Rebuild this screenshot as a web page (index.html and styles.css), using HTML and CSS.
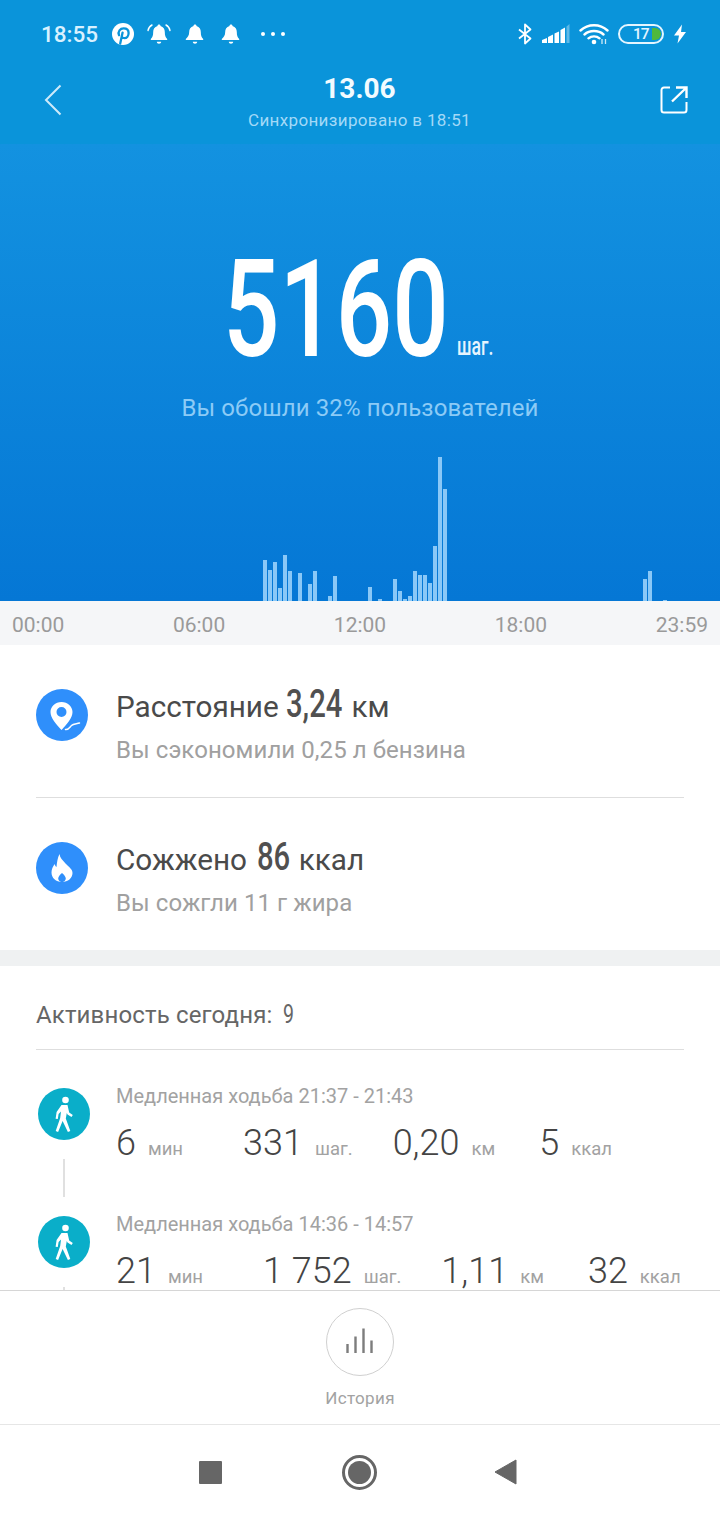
FILE: index.html
```html
<!DOCTYPE html>
<html lang="ru">
<head>
<meta charset="UTF-8">
<meta name="viewport" content="width=device-width, initial-scale=1.0">
<title>Шаги</title>
<link rel="stylesheet" href="styles.css">
</head>
<body>
<div class="app">
  <header class="topbar">
    <div class="status">
      <span class="clock">18:55</span>
      <svg class="st-pin" width="24" height="24" viewBox="0 0 24 24"><circle cx="12" cy="12" r="11" fill="#fff"/><path d="M9.2 21.5 11.6 10.6M8 13.2C6.6 9.4 9.2 6.4 12.6 6.4c3.2 0 5 2 5 4.600 0 3-1.800 5.200-4.200 5.200-1.300 0-2.200-.8-2.500-1.700" fill="none" stroke="#0a94da" stroke-width="2.300" stroke-linecap="round"/></svg>
      <svg class="st-bell" width="24" height="24" viewBox="0 0 24 24"><path d="M12 2.500c.9 0 1.500.6 1.500 1.400 3 .8 4.300 3.200 4.300 6.100 0 3.600.8 5.600 2.400 7v1H3.800v-1c1.600-1.400 2.400-3.400 2.400-7 0-2.900 1.300-5.300 4.300-6.100 0-.8.600-1.400 1.500-1.400zM9.800 19.800h4.400c0 1.200-1 2-2.200 2s-2.200-.8-2.200-2z" fill="#fff"/><path d="M1 8.500C1.500 6 3 4 5 3M23 8.500C22.500 6 21 4 19 3" fill="none" stroke="#fff" stroke-width="1.400" stroke-linecap="round"/></svg>
      <svg class="st-bell" width="24" height="24" viewBox="0 0 24 24"><path d="M12 2.500c.9 0 1.500.6 1.500 1.400 3 .8 4.300 3.200 4.300 6.100 0 3.600.8 5.600 2.400 7v1H2.800v-1c1.600-1.400 3.400-3.400 3.400-7 0-2.900 1.300-5.300 4.300-6.100 0-.8.600-1.400 1.500-1.400zM9.800 19.800h4.400c0 1.200-1 2-2.200 2s-2.200-.8-2.200-2z" fill="#fff"/></svg>
      <svg class="st-bell" width="24" height="24" viewBox="0 0 24 24"><path d="M12 2.500c.9 0 1.500.6 1.500 1.400 3 .8 4.300 3.200 4.300 6.100 0 3.600.8 5.600 2.400 7v1H2.800v-1c1.600-1.400 3.400-3.400 3.400-7 0-2.900 1.300-5.300 4.300-6.100 0-.8.600-1.400 1.500-1.400zM9.800 19.800h4.400c0 1.200-1 2-2.200 2s-2.200-.8-2.200-2z" fill="#fff"/></svg>
      <span class="st-dots"><i></i><i></i><i></i></span>
      <span class="st-right">
        <svg width="16" height="24" viewBox="0 0 16 24"><path d="M2 7.500 13.500 16.500 8 21.500V2.500l5.500 5L2 16.500" fill="none" stroke="#fff" stroke-width="1.800" stroke-linejoin="round"/></svg>
        <svg class="st-signal" width="28" height="22" viewBox="0 0 28 22"><path d="M0 17 5 15v5H0zM6 14l5-2.500V20H6zM12.500 10.500l4.500-2V20h-4.500zM18.500 7l4.500-2.500V20h-4.500z" fill="#fff"/><path d="M24.500 3.500 27.500 1v19h-3z" fill="#fff" opacity=".35"/></svg>
        <svg class="st-wifi" width="30" height="24" viewBox="0 0 30 24"><path d="M1.500 8.500c7.500-7 19.500-7 27 0M5.500 12.500c5-4.600 14-4.600 19 0M9.500 16.300c3-2.600 8-2.600 11 0" fill="none" stroke="#fff" stroke-width="2.400" stroke-linecap="round"/><circle cx="15" cy="20" r="2.300" fill="#fff"/><path d="M23 17v5M26.500 17v5" stroke="#fff" stroke-width="1.300" opacity=".8"/></svg>
        <span class="battery"><span class="bat-num">17</span><span class="bat-lvl"></span></span>
        <svg width="14" height="20" viewBox="0 0 14 20"><path d="M9 .5 1 11.500h5L4.500 19.500 13 8H8z" fill="#fff"/></svg>
      </span>
    </div>
    <div class="nav">
      <svg class="nav-back" width="18" height="32" viewBox="0 0 18 32"><path d="M16.500 1.500 2 16l14.500 14.500" fill="none" stroke="#cdeafa" stroke-width="2"/></svg>
      <div class="nav-title">
        <div class="nav-date">13.06</div>
        <div class="nav-sync">Синхронизировано в 18:51</div>
      </div>
      <svg class="nav-share" width="28" height="28" viewBox="0 0 28 28"><path d="M10 1.500H4A2.500 2.500 0 0 0 1.500 4v20A2.500 2.500 0 0 0 4 26.500h20a2.500 2.500 0 0 0 2.500-2.500v-8" fill="none" stroke="#fff" stroke-width="2"/><path d="M12 15.500 26 2M16 1.500h10.500V12" fill="none" stroke="#fff" stroke-width="2.400"/></svg>
    </div>
  </header>

  <section class="hero">
    <div class="steps"><span class="steps-num">5160</span><span class="steps-unit">шаг.</span></div>
    <div class="hero-sub">Вы обошли 32% пользователей</div>
    <div class="chart">
      <i style="height:41px"></i><i style="height:31px"></i><i style="height:39px"></i><i style="height:13px"></i><i style="height:46px"></i><i style="height:30px"></i><i style="height:0"></i><i style="height:28px"></i><i style="height:0"></i><i style="height:17px"></i><i style="height:30px"></i><i style="height:0"></i><i style="height:0"></i><i style="height:5px"></i><i style="height:25px"></i>
      <i style="height:0"></i><i style="height:0"></i><i style="height:0"></i><i style="height:0"></i><i style="height:0"></i><i style="height:0"></i>
      <i style="height:14px"></i><i style="height:0"></i><i style="height:2px"></i><i style="height:0"></i><i style="height:0"></i><i style="height:22px"></i><i style="height:10px"></i><i style="height:2px"></i><i style="height:5px"></i><i style="height:30px"></i><i style="height:26px"></i><i style="height:26px"></i><i style="height:18px"></i><i style="height:55px"></i><i style="height:144px"></i><i style="height:112px"></i>
      <i class="gap-evening"></i>
      <i style="height:22px"></i><i style="height:30px"></i><i style="height:0"></i><i style="height:0"></i><i style="height:1px"></i>
    </div>
  </section>

  <div class="axis">
    <span>00:00</span><span>06:00</span><span>12:00</span><span>18:00</span><span>23:59</span>
  </div>

  <section class="summary">
    <div class="sum-row">
      <span class="sum-icon">
        <svg width="52" height="52" viewBox="0 0 52 52"><path fill-rule="evenodd" d="M25.500 13c6.200 0 11 4.700 11 10 0 6-5.500 12-11 18-5.500-6-11-12-11-18 0-5.300 4.800-10 11-10zm0 5a5 5 0 1 0 0 10 5 5 0 0 0 0-10z" fill="#fff"/><path d="M29.500 40.500c3 .5 4-2 6-4 2-2 5-1.500 8-2.500" fill="none" stroke="#fff" stroke-width="1.500" stroke-linecap="round"/></svg>
      </span>
      <div class="sum-text">
        <div class="sum-main">Расстояние <span class="cond cond-dist"><b>3,24</b></span> км</div>
        <div class="sum-sub">Вы сэкономили 0,25 л бензина</div>
      </div>
    </div>
    <div class="sum-row sum-row-2">
      <span class="sum-icon">
        <svg width="52" height="52" viewBox="0 0 52 52"><path fill-rule="evenodd" d="M23.500 12c.5 4 3 6 6 9.500 3.500 3.800 7 5.500 7 9.500 0 5-4.500 9-10.500 9s-10.500-4-10.500-9.500c0-3.200 1.300-6 3.200-8.500.3 1.300.8 2.300 1.800 3 .5-4.500 1-9.500 3-13zM26 31c-2 1.800-3.800 3.600-3.800 5.600 0 1.900 1.700 3.400 3.800 3.400s3.800-1.500 3.800-3.400c0-2-1.800-3.800-3.800-5.600z" fill="#fff"/></svg>
      </span>
      <div class="sum-text">
        <div class="sum-main">Сожжено <span class="cond cond-kcal"><b>86</b></span> ккал</div>
        <div class="sum-sub">Вы сожгли 11 г жира</div>
      </div>
    </div>
  </section>

  <section class="activity">
    <div class="act-head">Активность сегодня: <span class="cond cond-count"><b>9</b></span></div>
    <div class="act-list">
      <div class="act-row">
        <div class="act-side">
          <span class="walk"><svg width="52" height="52" viewBox="0 0 52 52"><circle cx="27.500" cy="12" r="3.300" fill="#fff"/><path d="M23.500 17h6l1.700 7.500 3.600 2.600-1.300 2-4-2.500-.7-1.600-1 5.500 4.500 12.500-2.400 1-5.300-11-4.500 11-2.400-1 4.500-13 .8-6.500-2.400 2.500-.8 5-2.200-.3 1-6.700z" fill="#fff"/></svg></span>
          <span class="act-line"></span>
        </div>
        <div class="act-body">
          <div class="act-title">Медленная ходьба 21:37 - 21:43</div>
          <div class="act-stats">
            <span class="stat"><b>6</b><small>мин</small></span>
            <span class="stat"><b>331</b><small>шаг.</small></span>
            <span class="stat"><b>0,20</b><small>км</small></span>
            <span class="stat"><b>5</b><small>ккал</small></span>
          </div>
        </div>
      </div>
      <div class="act-row">
        <div class="act-side">
          <span class="walk"><svg width="52" height="52" viewBox="0 0 52 52"><circle cx="27.500" cy="12" r="3.300" fill="#fff"/><path d="M23.500 17h6l1.700 7.500 3.600 2.600-1.300 2-4-2.500-.7-1.600-1 5.500 4.500 12.500-2.400 1-5.300-11-4.500 11-2.400-1 4.500-13 .8-6.500-2.400 2.500-.8 5-2.200-.3 1-6.700z" fill="#fff"/></svg></span>
          <span class="act-line"></span>
        </div>
        <div class="act-body">
          <div class="act-title">Медленная ходьба 14:36 - 14:57</div>
          <div class="act-stats">
            <span class="stat"><b>21</b><small>мин</small></span>
            <span class="stat"><b>1 752</b><small>шаг.</small></span>
            <span class="stat"><b>1,11</b><small>км</small></span>
            <span class="stat"><b>32</b><small>ккал</small></span>
          </div>
        </div>
      </div>
    </div>
  </section>

  <section class="history">
    <span class="hist-btn"><svg width="32" height="28" viewBox="0 0 32 28"><path d="M3.500 25v-9M11.500 25V8.500M19.500 25V.5M27.500 25V12.500" stroke="#7d7d7d" stroke-width="2.400" fill="none"/></svg></span>
    <span class="hist-label">История</span>
  </section>

  <nav class="sysnav">
    <span class="sys-square"></span>
    <span class="sys-home"><span></span></span>
    <svg class="sys-back" width="23" height="26" viewBox="0 0 23 26"><path d="M22 1v24L1 13z" fill="#666" stroke="#666" stroke-linejoin="round"/></svg>
  </nav>
</div>
</body>
</html>
```

FILE: styles.css
```css
* {
  box-sizing: border-box;
}

html, body {
  margin: 0;
  padding: 0;
}

body {
  font-family: 'Roboto', 'Noto Sans', sans-serif;
  background-color: #fff;
}

.app {
  width: 720px;
  height: 1520px;
  overflow: hidden;
  display: flex;
  flex-direction: column;
}

.topbar {
  height: 144px;
  background-color: #0a94da;
  flex: none;
}

.status {
  height: 68px;
  padding: 0 33px 0 41px;
  display: flex;
  align-items: center;
  color: #e4f5ff;
}

.clock {
  font-size: 22.5px;
  font-weight: 500;
  color: #d8f1ff;
  width: 70px;
}

.st-bell {
  margin-left: 12px;
}

.st-dots {
  margin-left: 18px;
  display: flex;
  gap: 6px;
}

.st-dots i {
  width: 4px;
  height: 4px;
  border-radius: 50%;
  background-color: #fff;
}

.st-right {
  margin-left: auto;
  display: flex;
  align-items: center;
  gap: 9px;
}

.battery {
  width: 46px;
  height: 20px;
  border: 2px solid #e4f5ff;
  border-radius: 10px;
  position: relative;
  display: flex;
  align-items: center;
  padding-left: 13px;
}

.bat-num {
  font-size: 15.5px;
  font-weight: 500;
  letter-spacing: -1px;
  color: #e4f5ff;
}

.bat-lvl {
  position: absolute;
  right: 1px;
  top: 2px;
  width: 9px;
  height: 12px;
  background-color: #4fb83c;
  border-radius: 0 7px 7px 0;
}

.nav {
  height: 76px;
  padding: 0 32px 0 44px;
  display: flex;
  align-items: flex-start;
  justify-content: space-between;
}

.nav-back {
  margin-top: 16px;
}

.nav-title {
  text-align: center;
  margin: 3px 3px 0 0;
}

.nav-date {
  font-size: 28px;
  font-weight: 700;
  color: #f2fbff;
  line-height: 36px;
}

.nav-sync {
  font-size: 17px;
  letter-spacing: .35px;
  color: #a3d9f7;
  line-height: 26px;
}

.nav-share {
  margin-top: 18px;
}

.hero {
  height: 457px;
  flex: none;
  background: linear-gradient(#1392e0, #0577d5);
  display: flex;
  flex-direction: column;
  position: relative;
}

.steps {
  height: 212px;
  position: relative;
}

.steps-num {
  position: absolute;
  left: 223px;
  top: 88px;
  font-size: 136px;
  font-weight: 500;
  line-height: 156px;
  color: #fff;
  transform: scaleX(.73);
  transform-origin: left center;
}

.steps-unit {
  position: absolute;
  left: 457px;
  top: 187px;
  font-size: 26px;
  line-height: 30px;
  font-weight: 500;
  color: #e6f4fe;
  transform: scaleX(.68);
  transform-origin: left center;
}

.hero-sub {
  font-size: 24px;
  letter-spacing: .1px;
  line-height: 30px;
  text-align: center;
  color: #8ccbf6;
  margin-top: 37px;
}

.chart {
  position: absolute;
  left: 263px;
  bottom: 0;
  display: flex;
  align-items: flex-end;
  gap: 1px;
}

.chart i {
  width: 4px;
  background-color: #8ac8f7;
  flex: none;
}

.chart .gap-evening {
  width: 194px;
  background: none;
}

.axis {
  height: 44px;
  flex: none;
  background-color: #f5f6f8;
  display: flex;
  justify-content: space-between;
  align-items: center;
  padding: 3px 12px 0;
  font-size: 21px;
  color: #9a9a9a;
}

.summary {
  height: 305px;
  flex: none;
  padding: 0 36px;
}

.sum-row {
  height: 153px;
  display: flex;
  align-items: flex-start;
  padding-top: 44px;
  border-bottom: 1px solid #dedede;
}

.sum-row-2 {
  height: 152px;
  border-bottom: 0;
}

.sum-icon {
  width: 52px;
  height: 52px;
  border-radius: 50%;
  background-color: #2f8ffb;
  flex: none;
  display: block;
}

.sum-text {
  margin-left: 28px;
  margin-top: -5px;
}

.sum-main {
  font-size: 29.7px;
  line-height: 40px;
  color: #4a4a4a;
}

.sum-sub {
  font-size: 24px;
  line-height: 30px;
  letter-spacing: .07px;
  color: #a0a0a0;
  margin-top: 8px;
}

.cond {
  display: inline-block;
  vertical-align: baseline;
  color: #505050;
}

.cond b {
  display: inline-block;
  font-weight: 500;
  transform: scaleX(.75);
  transform-origin: left center;
}

.cond-dist {
  width: 58px;
  font-size: 39px;
}

.cond-kcal {
  width: 34px;
  margin-left: 3px;
  font-size: 39px;
}

.cond-count {
  width: 14px;
  font-size: 26px;
  margin-left: 4px;
  color: #666;
}

.cond-count b {
  font-weight: 400;
}

.activity {
  border-top: 16px solid #eff1f2;
  flex: 1;
  min-height: 0;
  overflow: hidden;
  padding: 0 36px;
  border-bottom: 1px solid #d6d6d6;
}

.act-head {
  height: 84px;
  line-height: 96px;
  font-size: 24px;
  letter-spacing: .15px;
  color: #666;
  border-bottom: 1px solid #dedede;
}

.act-list {
  padding-top: 38px;
}

.act-row {
  display: flex;
  height: 128px;
}

.act-side {
  width: 80px;
  flex: none;
  display: flex;
  flex-direction: column;
  padding-left: 2px;
}

.walk {
  width: 52px;
  height: 52px;
  border-radius: 50%;
  background-color: #0aaec9;
  display: block;
}

.act-line {
  width: 2px;
  height: 38px;
  margin: 19px 0 0 25px;
  background-color: #e0e0e0;
}

.act-title {
  font-size: 20px;
  line-height: 24px;
  color: #a2a2a2;
  margin-top: -4px;
}

.act-stats {
  display: flex;
  margin-top: 17px;
  align-items: baseline;
}

.stat {
  line-height: 36px;
}

.stat + .stat {
  margin-left: 40px;
}

.stat:nth-child(2) {
  margin-left: 60px;
}

.stat:nth-child(4) {
  margin-left: 44px;
}

.stat b {
  font-weight: 300;
  font-size: 36px;
  line-height: 36px;
  color: #444;
}

.stat small {
  font-size: 18.5px;
  line-height: 20px;
  color: #a2a2a2;
  margin-left: 12px;
}

.history {
  height: 133px;
  flex: none;
  display: flex;
  flex-direction: column;
  align-items: center;
  padding-top: 17px;
}

.hist-btn {
  width: 68px;
  height: 68px;
  border: 1px solid #d0d0d0;
  border-radius: 50%;
  display: flex;
  align-items: center;
  justify-content: center;
}

.hist-label {
  font-size: 17px;
  line-height: 24px;
  letter-spacing: .35px;
  color: #a2a2a2;
  margin-top: 10px;
}

.sysnav {
  height: 96px;
  flex: none;
  border-top: 1px solid #e6e6e6;
  display: flex;
  align-items: center;
  padding: 0 0 1px 199px;
}

.sys-square {
  width: 23px;
  height: 23px;
  border-radius: 1px;
  background-color: #666;
}

.sys-home {
  width: 35px;
  height: 35px;
  margin-left: 120px;
  border: 3px solid #666;
  border-radius: 50%;
  display: flex;
  align-items: center;
  justify-content: center;
}

.sys-home span {
  width: 23px;
  height: 23px;
  border-radius: 50%;
  background-color: #666;
}

.sys-back {
  margin-left: 117px;
}
```
